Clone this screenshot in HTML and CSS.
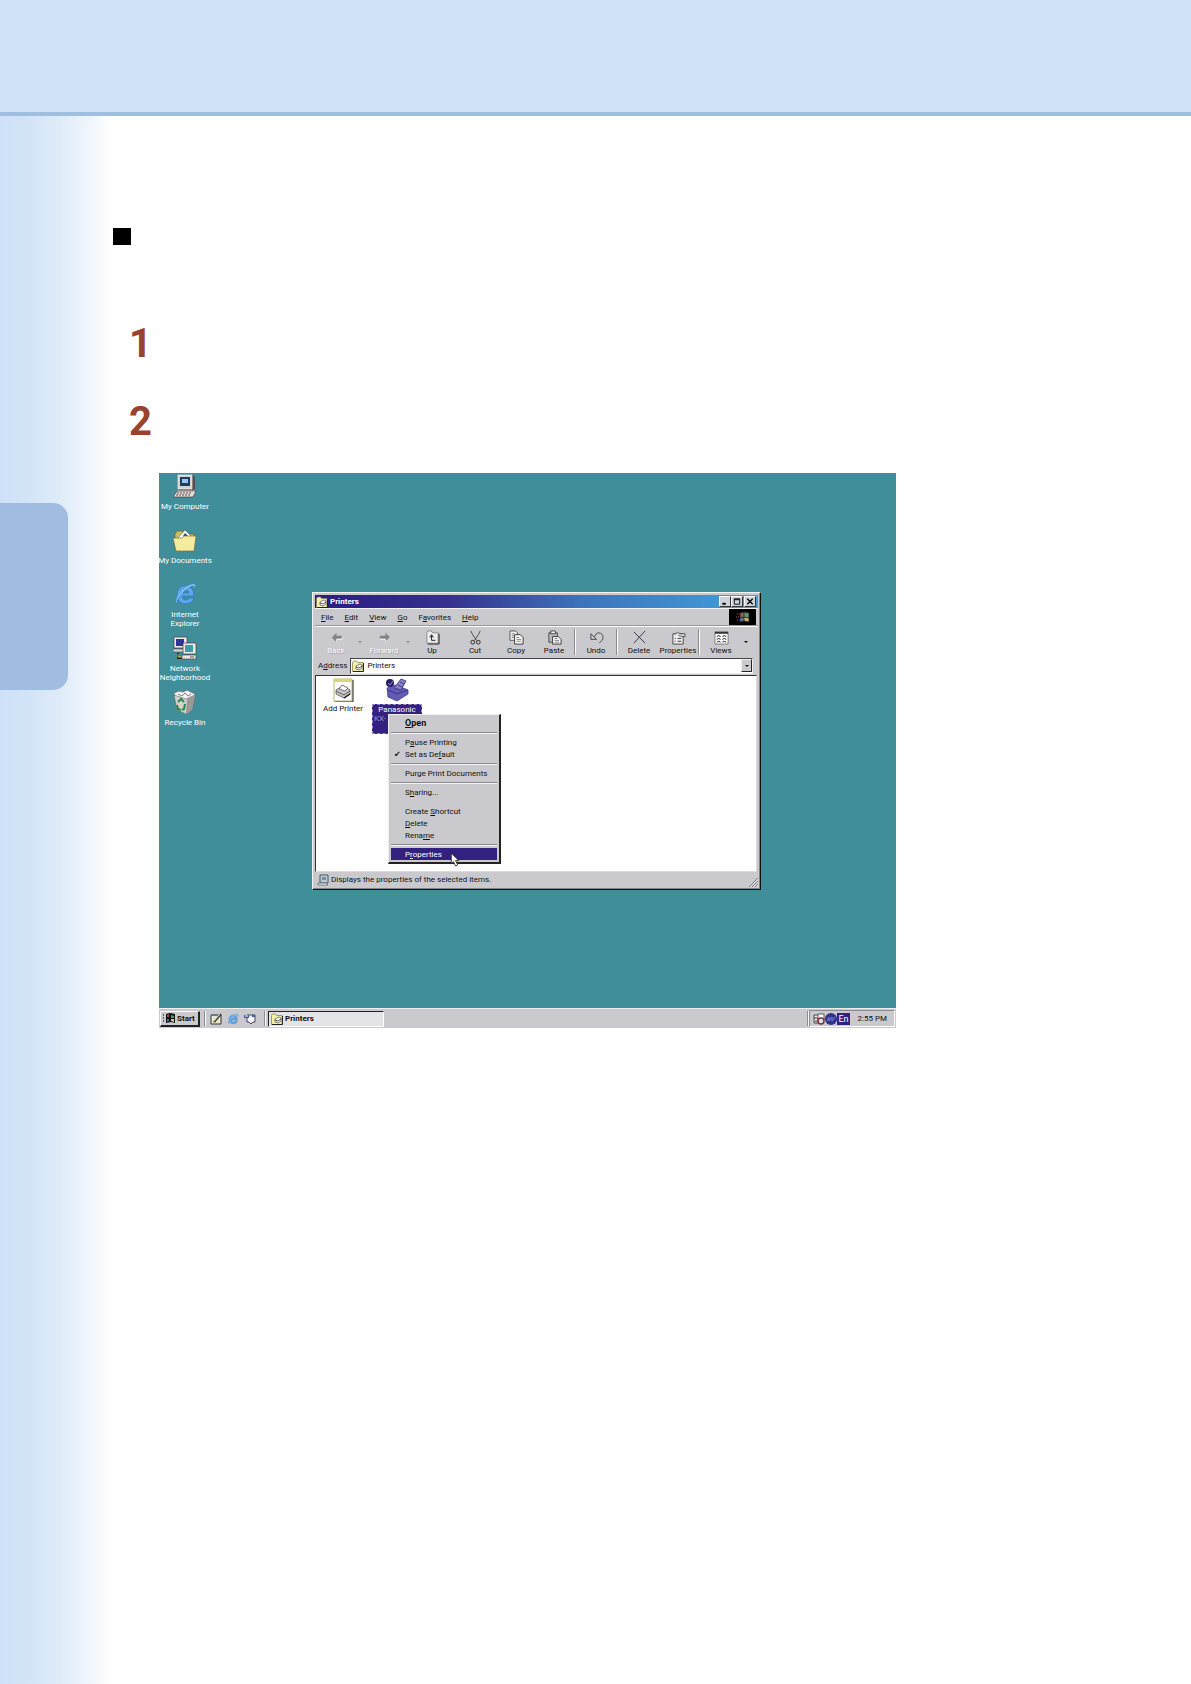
FILE: index.html
```
<!DOCTYPE html>
<html lang="en">
<head>
    <meta charset="UTF-8">
    <meta name="viewport" content="width=device-width, initial-scale=1.0">
    <title>Printers</title>
    <link rel="stylesheet" href="styles.css">
</head>
<body>
    <!-- Shared icons -->
    <svg class="defs" aria-hidden="true">
        <symbol id="folder" viewBox="0 0 12 12">
            <path d="M.5 11.5V2.5l1-1.500h3l1 1.500h5.500v9z" fill="#f3efa3" stroke="#8a8750" stroke-width=".8"/>
            <path d="M11.500 3v8.500H1" fill="none" stroke="#222"/>
            <path d="M4 6l4-2 2 1v3L7 10 4 9z" fill="#fff" stroke="#333" stroke-width=".6"/>
            <path d="M4 7l3 1 3-2" fill="none" stroke="#333" stroke-width=".8"/>
        </symbol>
        <symbol id="ie" viewBox="0 0 24 24">
            <path d="M21 14H9c0 5 6 5 7 2h5c-2 8-17 8-17-3C4 1 21 0 21 14zM9 11h7c-1-4-6-4-7 0z" fill="#5aa9ee" stroke="#3479c4" stroke-width=".8" fill-rule="evenodd"/>
            <path d="M4 22C-1 18 11 3 19 2c4-1 4 2 3 5 0-3-2-4-5-2C10 9 3 17 4 22z" fill="#86c4f5" stroke="#3479c4" stroke-width=".5"/>
        </symbol>
    </svg>

    <header class="page-header"></header>

    <div class="page-body">
        <aside class="sidebar">
            <div class="chapter-tab"></div>
        </aside>

        <main class="content">
            <div class="bullet"></div>
            <div class="step">1</div>
            <div class="step">2</div>

            <section class="screen">
                <div class="desktop">
                    <div class="desktop-icons">
                        <a class="shortcut" href="#">
                            <svg viewBox="0 0 24 24">
                                <path d="M6 1h14l2 2v12l-2 1H6z" fill="#55504e"/>
                                <path d="M5 1h14v14H5z" fill="#d8d2c8" stroke="#fff" stroke-width=".6"/>
                                <path d="M7 3h10v9H7z" fill="#1d3d66"/>
                                <path d="M9 5h6v4H9z" fill="#9cc4e3"/>
                                <path d="M4 16h18v3H4z" fill="#bcb4ac"/>
                                <path d="M4 17h19l-3 6H0z" fill="#e6e0da" stroke="#443d42" stroke-width=".7"/>
                                <path d="M4 19h15M3 21h15" stroke="#594b55" stroke-dasharray="2 1"/>
                            </svg>
                            <span>My Computer</span>
                        </a>
                        <a class="shortcut" href="#">
                            <svg viewBox="0 0 24 24">
                                <path d="M2 22V6l2-3h5l2 3h10v16z" fill="#c9bf62" stroke="#69643a" stroke-width=".7"/>
                                <path d="M4 11l8-9 8 8-4 7H6z" fill="#fff" stroke="#666" stroke-width=".6"/>
                                <path d="M10 8l2-3 3 3z" fill="#3b4c68"/>
                                <path d="M0 10h9l2-2h12l-2 15H3z" fill="#f5eb9d" stroke="#77713f" stroke-width=".7"/>
                            </svg>
                            <span>My Documents</span>
                        </a>
                        <a class="shortcut" href="#">
                            <svg><use href="#ie"/></svg>
                            <span>Internet<br>Explorer</span>
                        </a>
                        <a class="shortcut" href="#">
                            <svg viewBox="0 0 24 24">
                                <path d="M1 1h13v11H1z" fill="#eee8e2" stroke="#403b44" stroke-width=".7"/>
                                <path d="M3 3h8v7H3z" fill="#30329b"/>
                                <path d="M0 13h11v3H0z" fill="#ddd5cc" stroke="#403b44" stroke-width=".6"/>
                                <path d="M5 17v5h7" fill="none" stroke="#211f20" stroke-width="2"/>
                                <path d="M5 18v3h5" fill="none" stroke="#d7c735"/>
                                <path d="M10 7h13v11H10z" fill="#eee8e2" stroke="#403b44" stroke-width=".7"/>
                                <path d="M12 9h8v7h-8z" fill="#3a9cab"/>
                                <path d="M9 19h14v4H9z" fill="#ece4dc" stroke="#403b44" stroke-width=".6"/>
                                <path d="M17 21h4" stroke="#555"/>
                            </svg>
                            <span>Network<br>Neighborhood</span>
                        </a>
                        <a class="shortcut" href="#">
                            <svg viewBox="0 0 24 24">
                                <path d="M1 3l5-2 4 1 4-2 8 4v3l-8 3L2 7z" fill="#f2f0f2" stroke="#68646a" stroke-width=".7"/>
                                <path d="M5 4l4 2 3-3 3 3 3-2" fill="none" stroke="#817c83"/>
                                <path d="M1 5l12 4 9-4-3 15-6 4-9-4z" fill="#d2d0d0" stroke="#666" stroke-width=".6"/>
                                <path d="M14 9l8-4-3 15-6 4z" fill="#9b9898"/>
                                <path d="M5 12l3-3 3 3M4 15l1 4 3 1M12 14l-1 5-2 1" fill="none" stroke="#258c43" stroke-width="2"/>
                            </svg>
                            <span>Recycle Bin</span>
                        </a>
                    </div>

                    <!-- Printers window -->
                    <div class="window">
                        <div class="title-bar">
                            <svg class="small-icon"><use href="#folder"/></svg>
                            <span class="title">Printers</span>
                            <button class="win-btn" aria-label="Minimize"><svg viewBox="0 0 10 10"><path d="M2 7.500h4" stroke="#000" stroke-width="2"/></svg></button>
                            <button class="win-btn" aria-label="Maximize"><svg viewBox="0 0 10 10"><path d="M2 2h6v6H2zM2 3h6" fill="none" stroke="#000"/></svg></button>
                            <button class="win-btn close" aria-label="Close"><svg viewBox="0 0 10 10"><path d="M2 2l6 6M8 2L2 8" stroke="#000" stroke-width="1.500"/></svg></button>
                        </div>

                        <div class="menu-bar">
                            <button><u>F</u>ile</button>
                            <button><u>E</u>dit</button>
                            <button><u>V</u>iew</button>
                            <button><u>G</u>o</button>
                            <button>F<u>a</u>vorites</button>
                            <button><u>H</u>elp</button>
                            <svg class="brand" viewBox="0 0 27 16">
                                <path d="M0 0h27v16H0z" fill="#000"/>
                                <path d="M8 5h3M7 8h4M8 11h3" stroke="#9b5967" stroke-dasharray="1 1"/>
                                <path d="M11 4l4-1v5l-4 1z" fill="#8f6558"/>
                                <path d="M15 3l5 1v5l-5-1z" fill="#6a9270"/>
                                <path d="M11 9l4-1v4l-4 1z" fill="#5a7aa8"/>
                                <path d="M15 8l5 1v4l-5-1z" fill="#c4b966"/>
                                <path d="M11 4l4-1 5 1v9l-5-1-4 1zM15 3v9M11 9l4-1 5 1" fill="none" stroke="#222" stroke-width=".8"/>
                            </svg>
                        </div>

                        <div class="toolbar">
                            <button class="tool" disabled>
                                <svg viewBox="0 0 16 16"><path d="M3 8l5-5v3h6v3H8v4z" fill="#858388"/><path d="M8 13V10h6V7" fill="none" stroke="#fff" stroke-width=".7"/></svg>
                                <span>Back</span>
                            </button>
                            <i class="arrow off"></i>
                            <button class="tool" disabled>
                                <svg viewBox="0 0 16 16"><path d="M14 8L9 3v3H3v3h6v4z" fill="#858388"/><path d="M3 10h6v3l5-5" fill="none" stroke="#fff" stroke-width=".7"/></svg>
                                <span>Forward</span>
                            </button>
                            <i class="arrow off"></i>
                            <button class="tool">
                                <svg viewBox="0 0 16 16"><path d="M2 14V3l1-2h4l1 2h6v11z" fill="#eee" stroke="#888"/><path d="M15 4v11H3" fill="none" stroke="#222"/><path d="M5 8l2-3 2 3M7 6v5h4" fill="none" stroke="#111"/></svg>
                                <span>Up</span>
                            </button>
                            <button class="tool">
                                <svg viewBox="0 0 16 16"><path d="M3 1l2 4 4 6M13 1l-2 4-4 6" fill="none" stroke="#444"/><circle cx="5" cy="13" r="2" fill="none" stroke="#222"/><circle cx="11" cy="13" r="2" fill="none" stroke="#222"/></svg>
                                <span>Cut</span>
                            </button>
                            <button class="tool">
                                <svg viewBox="0 0 16 16"><path d="M1 1h6l2 2v8H1z" fill="#eee" stroke="#555"/><path d="M3 4h3M3 6h4M3 8h3" stroke="#555" stroke-width=".7"/><path d="M6 5h6l3 3v7H6z" fill="#fff" stroke="#333"/><path d="M8 8h3M8 10h5M8 12h5" stroke="#444" stroke-width=".7"/></svg>
                                <span>Copy</span>
                            </button>
                            <button class="tool">
                                <svg viewBox="0 0 16 16"><path d="M2 3h9v10H2z" fill="#bbb" stroke="#444"/><path d="M4 1h5v3H4z" fill="#eee" stroke="#444"/><path d="M6 7h6l3 3v5H6z" fill="#fff" stroke="#333"/><path d="M8 9h3M8 11h5M8 13h5" stroke="#444" stroke-width=".7"/></svg>
                                <span>Paste</span>
                            </button>
                            <i class="divider"></i>
                            <button class="tool">
                                <svg viewBox="0 0 16 16"><path d="M2 4v6h6M2 4l6 6M6 7c1-2 2-4 4-4 3 0 5 2 5 5 0 2-2 4-4 6" fill="none" stroke="#444"/></svg>
                                <span>Undo</span>
                            </button>
                            <i class="divider"></i>
                            <button class="tool">
                                <svg viewBox="0 0 16 16"><path d="M2 2l12 12M14 1L2 14" stroke="#333"/></svg>
                                <span>Delete</span>
                            </button>
                            <button class="tool">
                                <svg viewBox="0 0 16 16"><path d="M2 4h11v11H2z" fill="#eee" stroke="#444"/><path d="M4 9h1M7 9h4M4 12h1M7 12h4" stroke="#333"/><path d="M4 5l3-3 2 2h6v3h-3L8 6" fill="#ddd" stroke="#333" stroke-width=".8"/></svg>
                                <span>Properties</span>
                            </button>
                            <i class="divider"></i>
                            <button class="tool">
                                <svg viewBox="0 0 16 16"><path d="M1 2h14v13H1z" fill="#fff" stroke="#777"/><path d="M1 2h14v2H1z" fill="#333"/><path d="M3 7l2-1 2 1M9 7l2-1 2 1M3 10l2-1 2 1M9 10l2-1 2 1M3 13l2-1 2 1M9 13l2-1 2 1" fill="none" stroke="#111"/></svg>
                                <span>Views</span>
                            </button>
                            <i class="arrow"></i>
                        </div>

                        <div class="address-bar">
                            <label for="address">A<u>d</u>dress</label>
                            <div class="address-field">
                                <svg class="small-icon"><use href="#folder"/></svg>
                                <select id="address"><option>Printers</option></select>
                                <span class="drop"><i class="arrow"></i></span>
                            </div>
                        </div>

                        <div class="files">
                            <a class="file" href="#">
                                <svg viewBox="0 0 24 24">
                                    <path d="M3 1h18v22H3z" fill="#fff" stroke="#bcb671"/>
                                    <path d="M3 1h18v3H3z" fill="#d9d57b"/>
                                    <path d="M22 2v22H4" fill="none" stroke="#222"/>
                                    <path d="M5 12l7-4 7 4v4l-6 4-8-4z" fill="#c6c6c6" stroke="#555" stroke-width=".8"/>
                                    <path d="M8 11l3-4 6 3-3 3z" fill="#fff" stroke="#444" stroke-width=".7"/>
                                    <path d="M5 13l8 4 6-4" fill="none" stroke="#444" stroke-width=".8"/>
                                    <path d="M13 20l6-4" stroke="#222" stroke-width="1.500"/>
                                </svg>
                                <span>Add Printer</span>
                            </a>
                            <a class="file selected" href="#">
                                <svg viewBox="0 0 24 24">
                                    <path d="M2 10l9-3 12 5v4l-11 7-9-4z" fill="#625bb4" stroke="#43399a" stroke-width=".8"/>
                                    <path d="M9 10l7-9 5 2-5 9z" fill="#8983c9" stroke="#332879" stroke-width=".8"/>
                                    <path d="M13 7l4 2M15 4l4 2" stroke="#332879" stroke-width=".8"/>
                                    <path d="M3 12l9 4 11-4" fill="none" stroke="#332879" stroke-width=".8"/>
                                    <circle cx="5" cy="5" r="4" fill="#271c67"/>
                                    <path d="M3 5l2 2 3-4" fill="none" stroke="#8f8dd0"/>
                                </svg>
                                <span>Panasonic<br><em>KX-</em></span>
                            </a>
                        </div>

                        <div class="status-bar">
                            <svg class="small-icon" viewBox="0 0 12 12">
                                <path d="M3 1h8v8H3z" fill="#b5cbd8" stroke="#4c5661"/>
                                <path d="M5 3h4v3H5z" fill="#74939e"/>
                                <path d="M1 9h8l2 2H1z" fill="#eee" stroke="#4c5661" stroke-width=".7"/>
                            </svg>
                            <span>Displays the properties of the selected items.</span>
                            <svg class="grip" viewBox="0 0 10 10"><path d="M1 10l9-9M4 10l6-6M7 10l3-3" stroke="#77757b"/><path d="M2 10l8-8M5 10l5-5M8 10l2-2" stroke="#fff" stroke-width=".6"/></svg>
                        </div>
                    </div>

                    <!-- Context menu -->
                    <div class="context-menu">
                        <button class="default"><u>O</u>pen</button>
                        <hr>
                        <button>P<u>a</u>use Printing</button>
                        <button class="checked">Set as De<u>f</u>ault</button>
                        <hr>
                        <button>Pur<u>g</u>e Print Documents</button>
                        <hr>
                        <button>S<u>h</u>aring...</button>
                        <hr class="blank">
                        <button>Create <u>S</u>hortcut</button>
                        <button><u>D</u>elete</button>
                        <button>Rena<u>m</u>e</button>
                        <hr>
                        <button class="highlight">P<u>r</u>operties</button>
                        <svg class="cursor" viewBox="0 0 9 14"><path d="M1 1v10l2-2 2 4 2-1-2-4h3z" fill="#fff" stroke="#222" stroke-width=".8"/></svg>
                    </div>
                </div>

                <!-- Taskbar -->
                <div class="taskbar">
                    <button class="start">
                        <svg class="small-icon" viewBox="0 0 12 12">
                            <path d="M0 3h2M0 6h2M0 9h2" stroke="#000" stroke-dasharray="1 1"/>
                            <path d="M3 2l4-1 5 1v9l-4-1-5 1z" fill="#111"/>
                            <path d="M4 3l2-1v3H4z" fill="#a8464e"/>
                            <path d="M8 3l3 1v2H8z" fill="#5a9a6b"/>
                            <path d="M4 7h2v2l-2 1z" fill="#4965ae"/>
                            <path d="M8 7h3v3L8 9z" fill="#d5cd6c"/>
                        </svg>
                        Start
                    </button>
                    <i class="divider"></i>
                    <div class="quick-launch">
                        <button aria-label="Show Desktop"><svg viewBox="0 0 12 12"><path d="M1 2h10v9H1z" fill="#eee9c8" stroke="#333"/><path d="M1 1h6v2H1z" fill="#5681a0"/><path d="M4 9l7-8" stroke="#333" stroke-width="2"/><path d="M4 8l6-7" stroke="#eee"/></svg></button>
                        <button aria-label="Internet Explorer"><svg><use href="#ie"/></svg></button>
                        <button aria-label="Channels"><svg viewBox="0 0 12 12"><path d="M3 2h8v7H9l-2 2-2-2H3z" fill="#f4f4f8" stroke="#445"/><path d="M0 2h5v3H0zM8 2h3v2H8z" fill="#4558a8"/><path d="M1 3h3" stroke="#fff"/></svg></button>
                    </div>
                    <i class="divider"></i>
                    <button class="task"><svg class="small-icon"><use href="#folder"/></svg>Printers</button>
                    <i class="divider tray-divider"></i>
                    <div class="tray">
                        <svg viewBox="0 0 12 12"><path d="M1 2h6v8H1z" fill="#eee" stroke="#222" stroke-width=".8"/><path d="M5 1h6v6H5z" fill="#fff" stroke="#333" stroke-width=".8"/><path d="M1 5h4M2 8h3" stroke="#333"/><circle cx="8" cy="8" r="3" fill="#ddd" stroke="#852d40" stroke-width="1.500"/></svg>
                        <svg viewBox="0 0 12 12"><circle cx="6" cy="6" r="6" fill="#33318c"/><path d="M2 8l2-4v4l3-4v4l3-4" fill="none" stroke="#7084cf"/></svg>
                        <span class="lang">En</span>
                        <time>2:55 PM</time>
                    </div>
                </div>
            </section>
        </main>
    </div>
</body>
</html>
```

FILE: styles.css
```
* {
    box-sizing: border-box;
}
body {
    margin: 0;
    min-height: 100vh;
    display: flex;
    flex-direction: column;
    background-color: #fff;
    font-family: Roboto, "Liberation Sans", Arial, sans-serif;
}
svg {
    display: block;
    flex: none;
}
button {
    padding: 0;
    border: none;
    background: none;
    font: inherit;
    color: inherit;
}
a {
    color: inherit;
    text-decoration: none;
}
.defs {
    position: absolute;
    width: 0;
    height: 0;
}

/* Page */
.page-header {
    height: 116px;
    background-color: #d0e2f8;
    border-bottom: 4px solid #a0bee0;
}
.page-body {
    flex: 1;
    display: flex;
}
.sidebar {
    width: 113px;
    flex: none;
    padding-top: 387px;
    background: linear-gradient(to right, #cee1f9 0, #d3e4f7 28px, #e0edf9 64px, #f0f6fd 90px, #fff 112px);
}
.chapter-tab {
    width: 68px;
    height: 187px;
    background-color: #a0bde1;
    border-radius: 0 15px 15px 0;
}
.content {
    flex: 1;
    padding: 112px 295px 0 0;
}
.bullet {
    width: 18px;
    height: 17px;
    margin-bottom: 76px;
    background-color: #000;
}
.step {
    height: 78px;
    padding-left: 16px;
    font-size: 40px;
    font-weight: bold;
    line-height: 46px;
    color: #99432e;
}
.step + .step {
    height: 74px;
}

/* Desktop */
.screen {
    margin-left: 46px;
    font-size: 8px;
    line-height: 9px;
    color: #111;
}
.desktop {
    position: relative;
    height: 535px;
    padding-top: 1px;
    background-color: #408e9a;
}
.desktop-icons {
    width: 52px;
    display: flex;
    flex-direction: column;
}
.shortcut {
    height: 54px;
    display: flex;
    flex-direction: column;
    align-items: center;
    gap: 4px;
    color: #fff;
    text-align: center;
    white-space: nowrap;
}
.shortcut svg,
.file svg {
    width: 24px;
    height: 24px;
}
.small-icon {
    width: 12px;
    height: 12px;
}

/* Window */
.window {
    position: absolute;
    left: 153px;
    top: 119px;
    width: 449px;
    height: 298px;
    display: flex;
    flex-direction: column;
    padding: 2px;
    background-color: #cac9ce;
    border: 1px solid #f4f4f6;
    border-right-color: #111;
    border-bottom-color: #111;
    box-shadow: inset -1px -1px #858389;
}
.title-bar {
    height: 13px;
    display: flex;
    align-items: center;
    padding: 0 2px 0 1px;
    background: linear-gradient(to right, #2c1b82, #35308f 30%, #3d73bb 60%, #42a0dc);
    color: #fff;
    font-weight: bold;
}
.title {
    flex: 1;
    padding-left: 2px;
}
.win-btn {
    width: 12px;
    height: 11px;
    background-color: #d2d1d5;
    border: 1px solid #fff;
    border-right-color: #333;
    border-bottom-color: #333;
}
.win-btn svg {
    width: 10px;
    height: 9px;
}
.close {
    margin-left: 1px;
}
.menu-bar {
    height: 18px;
    display: flex;
    align-items: center;
    gap: 11px;
    padding: 0 2px 0 6px;
    border-top: 1px solid #f4f4f6;
    border-bottom: 1px solid #98969c;
}
.brand {
    width: 27px;
    height: 16px;
    margin-left: auto;
}
.toolbar {
    height: 31px;
    display: grid;
    grid-template-columns: 42px 6px 42px 6px 42px 44px 38px 38px 4px 38px 4px 40px 38px 4px 40px 10px;
    align-items: center;
    border-top: 1px solid #fff;
}
.tool {
    display: flex;
    flex-direction: column;
    align-items: center;
    gap: 1px;
}
.tool svg {
    width: 15px;
    height: 15px;
}
.tool:disabled {
    color: #f6f6f8;
    text-shadow: 1px 1px #aaa9ae;
}
.arrow {
    justify-self: center;
    border: 2px solid transparent;
    border-top-color: #111;
    border-bottom: none;
}
.arrow.off {
    border-top-color: #88868c;
}
.divider {
    width: 2px;
    height: 26px;
    justify-self: center;
    border-left: 1px solid #8c8a90;
    border-right: 1px solid #fff;
}
.address-bar {
    height: 18px;
    display: flex;
    align-items: center;
    gap: 3px;
    padding: 0 5px 1px 3px;
}
.address-field {
    flex: 1;
    height: 16px;
    display: flex;
    align-items: center;
    padding-left: 1px;
    background-color: #fff;
    border: 1px solid #444;
    border-right-color: #eee;
    border-bottom-color: #eee;
}
.address-field select {
    flex: 1;
    appearance: none;
    padding: 0 3px;
    border: none;
    background: none;
    font: inherit;
    color: inherit;
}
.drop {
    width: 11px;
    height: 13px;
    display: flex;
    align-items: center;
    justify-content: center;
    background-color: #cac9ce;
    border: 1px solid #eee;
    border-right-color: #222;
    border-bottom-color: #222;
}
.files {
    flex: 1;
    display: flex;
    padding-top: 2px;
    margin-right: 1px;
    background-color: #fff;
    border: 1px solid #333;
    border-right-color: #ddd;
    border-bottom-color: #ddd;
}
.file {
    width: 54px;
    display: flex;
    flex-direction: column;
    align-items: center;
    gap: 2px;
    text-align: center;
    white-space: nowrap;
}
.file span {
    padding: 0 5px;
}
.selected span {
    width: 50px;
    height: 30px;
    background-color: #33207f;
    border: 1px dashed #9b92c7;
    color: #fff;
}
.selected em {
    display: block;
    font-style: normal;
    text-align: left;
    margin-left: -4px;
    color: #8f9add;
}
.status-bar {
    height: 15px;
    display: flex;
    align-items: center;
    gap: 2px;
    padding-left: 2px;
}
.grip {
    width: 10px;
    height: 10px;
    margin-left: auto;
    align-self: flex-end;
}

/* Context menu */
.context-menu {
    position: absolute;
    left: 229px;
    top: 241px;
    width: 113px;
    padding: 2px;
    background-color: #cac9ce;
    border: 1px solid #eee;
    border-right: 2px solid #222;
    border-bottom: 2px solid #222;
}
.context-menu button {
    display: block;
    position: relative;
    width: 100%;
    height: 12px;
    padding-left: 14px;
    text-align: left;
    white-space: nowrap;
}
.context-menu hr {
    height: 2px;
    margin: 3px 0 2px;
    border: none;
    border-top: 1px solid #8c8a90;
    border-bottom: 1px solid #f4f4f6;
}
.context-menu .blank {
    border-color: transparent;
}
.context-menu .default {
    font-size: 9px;
    font-weight: bold;
}
.checked::before {
    content: "✔";
    position: absolute;
    left: 3px;
    font-family: "DejaVu Sans", sans-serif;
}
.context-menu .highlight {
    background-color: #33207f;
    color: #fff;
}
.cursor {
    position: absolute;
    left: 61px;
    bottom: -5px;
    width: 10px;
    height: 15px;
}

/* Taskbar */
.taskbar {
    height: 20px;
    display: flex;
    align-items: center;
    gap: 4px;
    padding: 0 1px;
    background-color: #cac9ce;
    border-top: 1px solid #eeeef0;
}
.taskbar .divider {
    height: 15px;
}
.start,
.task {
    height: 16px;
    display: flex;
    align-items: center;
    gap: 2px;
    padding: 0 2px;
    font-weight: bold;
}
.start {
    width: 40px;
    border: 1px solid #fff;
    border-right: 2px solid #222;
    border-bottom: 2px solid #222;
}
.quick-launch {
    display: flex;
    gap: 5px;
    padding-right: 4px;
}
.quick-launch svg,
.tray svg {
    width: 12px;
    height: 12px;
}
.task {
    width: 116px;
    margin-left: -2px;
    background-color: #e4e3e7;
    border: 1px solid #222;
    border-right-color: #fff;
    border-bottom-color: #fff;
}
.tray-divider {
    margin-left: auto;
}
.taskbar .tray-divider {
    margin-right: -4px;
}
.tray {
    height: 17px;
    display: flex;
    align-items: center;
    padding: 0 7px 0 3px;
    border: 1px solid #8c8a90;
    border-right-color: #fff;
    border-bottom-color: #fff;
}
.lang {
    padding: 2px 1px 1px;
    background-color: #33207f;
    color: #fff;
    font-size: 9px;
}
.tray time {
    padding-left: 8px;
}
```
